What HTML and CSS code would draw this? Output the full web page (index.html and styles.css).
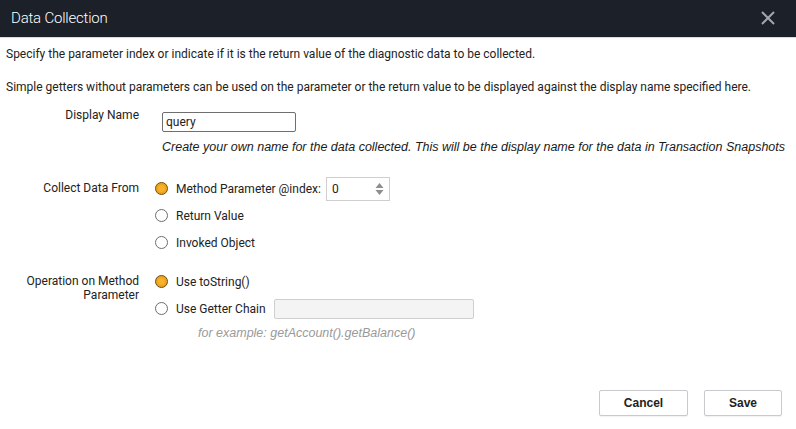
FILE: index.html
```html
<!DOCTYPE html>
<html>
<head>
<meta charset="utf-8">
<link rel="stylesheet" href="styles.css">
</head>
<body>
<div class="dialog">
  <div class="header">
    <span class="title">Data Collection</span>
    <svg class="close" width="16" height="16" viewBox="0 0 16 16"><path d="M2 2 L14 14 M14 2 L2 14" stroke="#a3a6ab" stroke-width="2" fill="none"/></svg>
  </div>
  <div class="content">
    <p class="intro first">Specify the parameter index or indicate if it is the return value of the diagnostic data to be collected.</p>
    <p class="intro second">Simple getters without parameters can be used on the parameter or the return value to be displayed against the display name specified here.</p>

    <div class="section s1">
      <div class="label">Display Name</div>
      <div class="controls">
        <div class="text-input">query</div>
        <div class="helper">Create your own name for the data collected. This will be the display name for the data in Transaction Snapshots</div>
      </div>
    </div>

    <div class="section s2">
      <div class="label">Collect Data From</div>
      <div class="controls">
        <div class="opt"><span class="radio on"></span><span class="opt-text">Method Parameter @index:</span>
          <div class="num-input"><span>0</span><svg width="9" height="14" viewBox="0 0 9 14"><path d="M4.5 1 L8.5 6 L0.5 6 Z M4.5 13 L8.5 8 L0.5 8 Z" fill="#8e8e8e"/></svg></div>
        </div>
        <div class="opt"><span class="radio"></span><span class="opt-text">Return Value</span></div>
        <div class="opt"><span class="radio"></span><span class="opt-text">Invoked Object</span></div>
      </div>
    </div>

    <div class="section s3">
      <div class="label l3">Operation on Method Parameter</div>
      <div class="controls">
        <div class="opt"><span class="radio on"></span><span class="opt-text">Use toString()</span></div>
        <div class="opt"><span class="radio"></span><span class="opt-text">Use Getter Chain</span><div class="chain-input"></div></div>
        <div class="example">for example: getAccount().getBalance()</div>
      </div>
    </div>
  </div>
  <div class="footer">
    <button class="btn cancel">Cancel</button>
    <button class="btn save">Save</button>
  </div>
</div>
</body>
</html>
```

FILE: styles.css
```css
* { box-sizing: border-box; }
html, body { margin: 0; padding: 0; background: #fff; }
body { font-family: Roboto, "Liberation Sans", sans-serif; font-size: 12px; color: #222; }
.dialog { width: 796px; height: 429px; display: flex; flex-direction: column; }
.header {
  height: 38px; background: #1b2029; border-bottom: 1px solid #d8dadd;
  display: flex; align-items: center; justify-content: space-between;
  padding: 0 20px 0 11px;
}
.title { color: #fff; font-size: 15px; font-weight: 300; letter-spacing: -0.2px; margin-top: -1px; }
.close { display: block; margin-top: -1px; }
.content { padding: 0 0 0 6px; }
.intro { margin: 0; line-height: 16px; }
.intro.first { margin-top: 8px; }
.intro.second { margin-top: 17px; }
.section { display: grid; grid-template-columns: 133px 1fr; column-gap: 16px; }
.label { text-align: right; line-height: 16px; }
.s1 { margin-top: 12px; }
.s1 .controls { padding-left: 7px; }
.text-input {
  margin-top: 5px; width: 134px; height: 20px; border: 1px solid #6f6f6f; border-radius: 2px;
  padding: 0 3px; line-height: 18px; font-size: 12px;
}
.helper { margin-top: 7px; line-height: 16px; font-family: "Liberation Sans", Arial, sans-serif; font-size: 12.5px; font-style: italic; color: #1a1a1a; }
.s2 { margin-top: 20px; }
.s2 .label { padding-top: 5px; }
.opt { display: flex; align-items: center; height: 27px; }
.radio {
  width: 13px; height: 13px; border-radius: 50%; border: 1px solid #6d6d6d; background: #fff; flex: none;
}
.radio.on { border: 1px solid #6b4f10; background: #f7b22a; box-shadow: inset 0 0 0 2px #eea31b; }
.opt-text { margin-left: 8px; }
.num-input {
  margin-left: 5px; width: 64px; height: 24px; border: 1px solid #cfcfcf;
  display: flex; align-items: center; justify-content: space-between; padding: 0 5px 0 5px;
}
.num-input svg { display: block; }
.s3 { margin-top: 12px; }
.l3 { padding-top: 6px; line-height: 14px; }
.chain-input {
  margin-left: 8px; width: 200px; height: 20px; background: #f4f4f4; border: 1px solid #cfcfcf; border-radius: 2px;
}
.example { margin-top: 3px; margin-left: 43px; line-height: 16px; font-family: "Liberation Sans", Arial, sans-serif; font-size: 12.5px; font-style: italic; color: #9a9a9a; }
.footer { margin-top: auto; display: flex; justify-content: flex-end; gap: 16px; padding: 0 14px 13px 0; }
.btn {
  height: 26px; background: #fff; border: 1px solid #c9cacd; border-radius: 2px;
  font-family: "Liberation Sans", Arial, sans-serif; font-weight: bold; font-size: 12px; color: #222;
  box-shadow: 0 1px 1px rgba(0,0,0,0.06); padding: 0;
}
.cancel { width: 89px; }
.save { width: 78px; }
```
